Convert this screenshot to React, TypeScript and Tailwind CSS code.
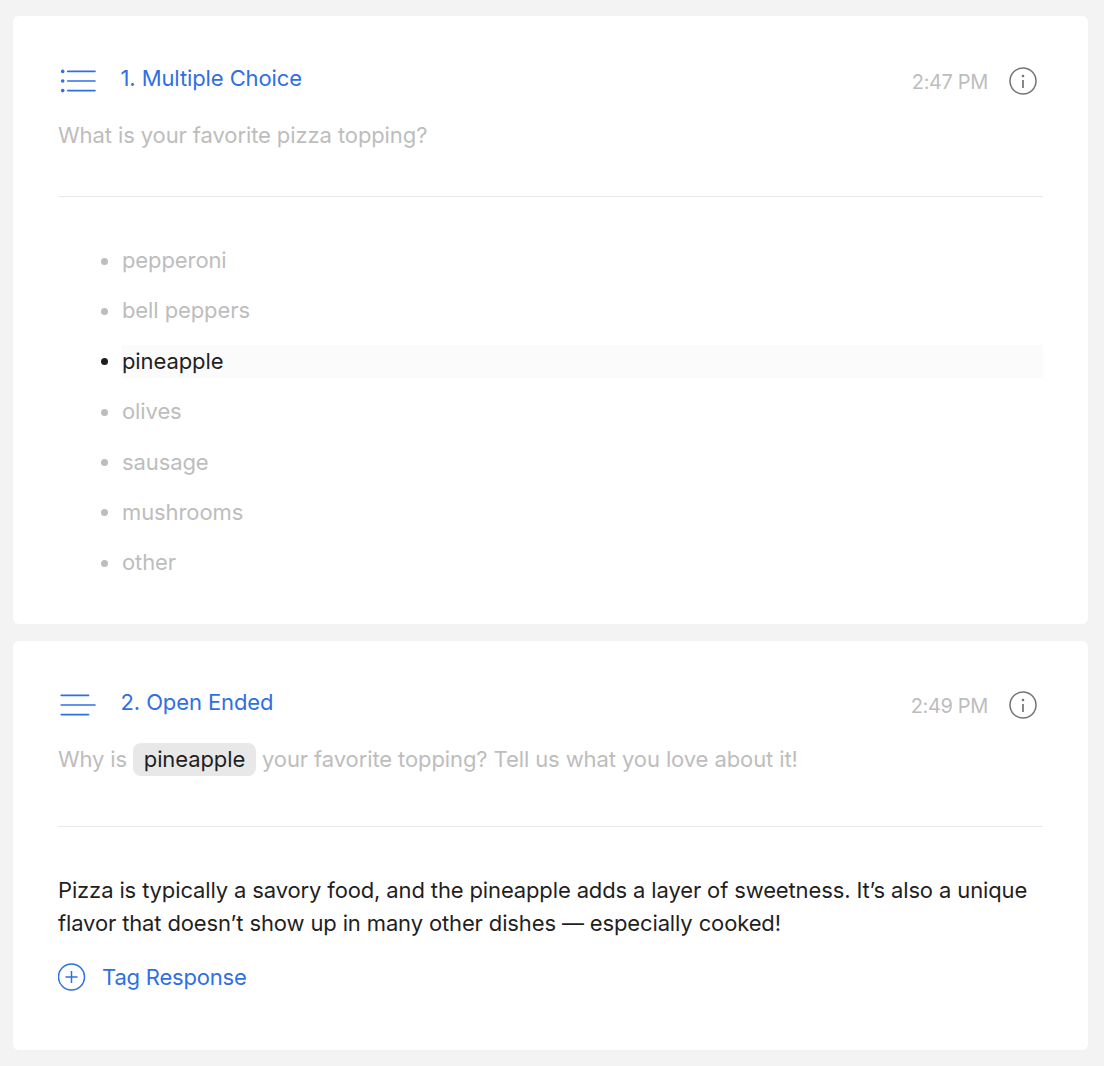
import type { ReactNode } from 'react';

const toppings = [
  { label: 'pepperoni' },
  { label: 'bell peppers' },
  { label: 'pineapple', selected: true },
  { label: 'olives' },
  { label: 'sausage' },
  { label: 'mushrooms' },
  { label: 'other' },
];

function ListIcon() {
  return (
    <svg width="38" height="28" viewBox="0 0 38 28" fill="none" stroke="#2f6fe4" strokeWidth="1.6" strokeLinecap="round">
      <path d="M9.7 4.4H37M9.7 14H37M9.7 23.6H37" />
      <g fill="#2f6fe4" stroke="none">
        <circle cx="4.7" cy="4.4" r="1.8" />
        <circle cx="4.7" cy="14" r="1.8" />
        <circle cx="4.7" cy="23.6" r="1.8" />
      </g>
    </svg>
  );
}

function LinesIcon() {
  return (
    <svg width="38" height="28" viewBox="0 0 38 28" fill="none" stroke="#2f6fe4" strokeWidth="1.6" strokeLinecap="round">
      <path d="M3.2 4.4H30.6M3.2 14H37M3.2 23.6H30.6" />
    </svg>
  );
}

function InfoIcon() {
  return (
    <svg width="28" height="28" viewBox="0 0 28 28" fill="none" stroke="#737373" strokeWidth="1.5">
      <circle cx="14" cy="14" r="13" />
      <path d="M14 13V21" strokeWidth="1.7" />
      <circle cx="14" cy="9" r="1.3" fill="#737373" stroke="none" />
    </svg>
  );
}

function PlusIcon() {
  return (
    <svg className="mb-px" width="28" height="28" viewBox="0 0 28 28" fill="none" stroke="#2f6fe4" strokeWidth="1.5">
      <circle cx="13.5" cy="14" r="13" />
      <path d="M13.5 8V20M7.5 14H19.5" />
    </svg>
  );
}

interface HeaderProps {
  icon: ReactNode;
  title: string;
  time: string;
}

function Header({ icon, title, time }: HeaderProps) {
  return (
    <div className="flex items-start">
      <div className="mt-[5px]">{icon}</div>
      <h2 className="ml-[24.5px] text-[#2f6fe4]">{title}</h2>
      <span className="ml-auto mt-1 text-[20px] tracking-[-0.35px] text-[#bdbdbd]">{time}</span>
      <button className="ml-[21px] mr-1.5 mt-[5px]" aria-label="Details">
        <InfoIcon />
      </button>
    </div>
  );
}

export default function App() {
  return (
    <main className="flex h-[1066px] w-[1104px] flex-col gap-[17px] bg-[#f3f3f3] pt-4 pr-4 pl-[13px] font-['Inter',sans-serif] text-[22px] leading-[33px] tracking-[-0.1px] text-[#1f1f1f]">
      <section className="h-[608px] rounded-md bg-white px-[45px] pt-[46px]">
        <Header icon={<ListIcon />} title="1. Multiple Choice" time="2:47 PM" />
        <p className="mt-5 text-[#bdbdbd]">What is your favorite pizza topping?</p>
        <hr className="mt-11 border-[#e8e8e8]" />
        <ul className="mt-[47px] flex flex-col gap-[17.4px] pl-16">
          {toppings.map((topping) => (
            <li
              key={topping.label}
              className={`flex items-center ${topping.selected ? 'bg-[#fbfbfb]' : 'text-[#bdbdbd]'}`}
            >
              <span className="-ml-[21px] mr-3.5 mt-px size-[7px] rounded-full bg-current" />
              {topping.label}
            </li>
          ))}
        </ul>
      </section>

      <section className="h-[409px] rounded-md bg-white px-[45px] pt-[45px]">
        <Header icon={<LinesIcon />} title="2. Open Ended" time="2:49 PM" />
        <p className="mt-5 flex text-[#bdbdbd]">
          <span className="tracking-[-0.15px]">Why is</span>
          <span className="mx-1.5 w-[123px] rounded-lg bg-[#e8e8e8] text-center text-[#1f1f1f]">pineapple</span>
          <span>your favorite topping? Tell us what you love about it!</span>
        </p>
        <hr className="mt-[50px] border-[#e8e8e8]" />
        <p className="mt-[47px] tracking-[-0.135px] whitespace-nowrap">
          Pizza is typically a savory food, and the pineapple adds a layer of sweetness. It’s also a unique
          <br />
          flavor that doesn’t show up in many other dishes — especially cooked!
        </p>
        <button className="mt-[21px] flex items-center gap-4 tracking-[-0.2px] text-[#2f6fe4]">
          <PlusIcon />
          Tag Response
        </button>
      </section>
    </main>
  );
}
